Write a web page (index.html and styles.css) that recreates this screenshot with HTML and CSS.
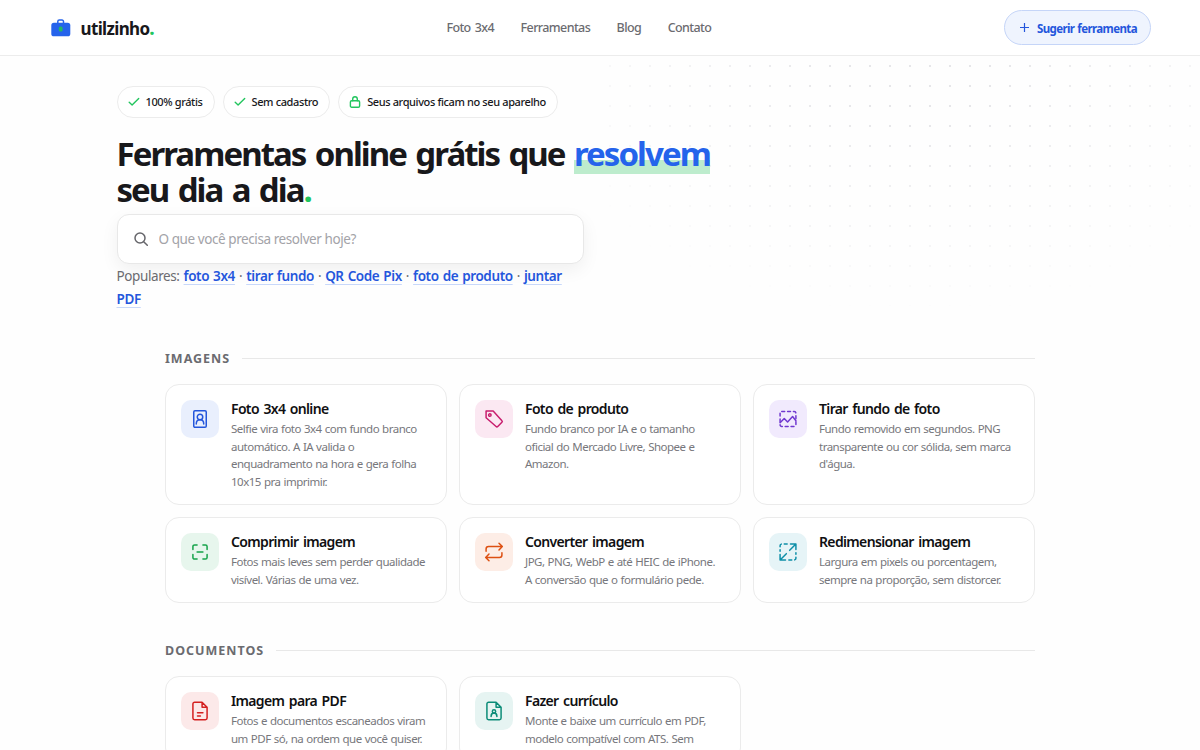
FILE: index.html
```html
<!DOCTYPE html>
<html lang="pt-BR">
<head>
  <meta charset="UTF-8" />
  <meta name="viewport" content="width=device-width, initial-scale=1.0"/>
  <title>utilzinho</title>
  <link rel="stylesheet" href="styles.css">
</head>
<body>
  <header class="topbar">
    <a class="logo" href="#">
      <svg width="20" height="18" viewBox="0 0 20 18">
        <path d="M6.800 4.500V2.600a1.500 1.500 0 0 1 1.500-1.500h2.700a1.500 1.500 0 0 1 1.500 1.500v1.900" fill="none" stroke="#2563eb" stroke-width="1.500"/>
        <rect x="0.300" y="3.800" width="19" height="13.500" rx="2.600" fill="#2563eb"/>
        <rect x="7.800" y="7.500" width="3.800" height="5" rx="1.500" fill="#22b866"/>
      </svg>
      <span>utilzinho<b class="dot">.</b></span>
    </a>
    <nav class="menu">
      <a href="#">Foto 3x4</a>
      <a href="#">Ferramentas</a>
      <a href="#">Blog</a>
      <a href="#">Contato</a>
    </nav>
    <a class="suggest" href="#">
      <svg width="9" height="9" viewBox="0 0 9 9"><path d="M4.500 0v9M0 4.500h9"/></svg>
      <span>Sugerir ferramenta</span>
    </a>
  </header>

  <section class="hero">
    <div class="hero-inner">
      <div class="badges">
        <span class="badge"><svg width="12" height="12" viewBox="0 0 12 12"><path d="M1.200 6.300l2.900 2.700L10.700 2.500"/></svg><span>100% grátis</span></span>
        <span class="badge"><svg width="12" height="12" viewBox="0 0 12 12"><path d="M1.200 6.300l2.900 2.700L10.700 2.500"/></svg><span>Sem cadastro</span></span>
        <span class="badge"><svg width="12" height="12" viewBox="0 0 12 12"><rect x="1.400" y="4.800" width="9.200" height="6.400" rx="1.300"/><path d="M3.700 4.800V3a2.300 2.300 0 0 1 4.600 0v1.800"/></svg><span>Seus arquivos ficam no seu aparelho</span></span>
      </div>
      <h1>Ferramentas online grátis que <span class="mark">resolvem</span><br>seu dia a dia<span class="dot">.</span></h1>
      <div class="search">
        <svg width="14" height="14" viewBox="0 0 14 14"><circle cx="6" cy="6" r="5"/><path d="M9.700 9.700l3.600 3.600"/></svg>
        <input type="text" placeholder="O que você precisa resolver hoje?">
      </div>
      <p class="popular">Populares: <a href="#">foto 3x4</a> · <a href="#">tirar fundo</a> · <a href="#">QR Code Pix</a> · <a href="#">foto de produto</a> · <a href="#">juntar<br>PDF</a></p>
    </div>
  </section>

  <main class="tools">
    <h2><span>IMAGENS</span></h2>
    <div class="grid">
      <a class="card" href="#">
        <span class="icon blue"><svg viewBox="0 0 24 24"><rect x="4.500" y="2" width="15" height="20" rx="1.500"/><circle cx="12" cy="9.500" r="3.300"/><path d="M7.500 18c0-3 2-5 4.500-5s4.500 2 4.500 5"/></svg></span>
        <div><h3>Foto 3x4 online</h3><p>Selfie vira foto 3x4 com fundo branco<br>automático. A IA valida o<br>enquadramento na hora e gera folha<br>10x15 pra imprimir.</p></div>
      </a>
      <a class="card" href="#">
        <span class="icon pink"><svg viewBox="0 0 24 24"><path d="M2.500 2.500h8.500L21.500 14q1 1 0 2l-5 5q-1 1-2 0L2.500 10.500z"/><circle cx="7" cy="7.300" r="1.500"/></svg></span>
        <div><h3>Foto de produto</h3><p>Fundo branco por IA e o tamanho<br>oficial do Mercado Livre, Shopee e<br>Amazon.</p></div>
      </a>
      <a class="card" href="#">
        <span class="icon purple"><svg viewBox="0 0 24 24"><rect x="2.500" y="3" width="19" height="18" rx="2" stroke-dasharray="3.500 3.500"/><path d="M2.500 16.500l5-5 4 4 6-6.500 4 5"/></svg></span>
        <div><h3>Tirar fundo de foto</h3><p>Fundo removido em segundos. PNG<br>transparente ou cor sólida, sem marca<br>d'água.</p></div>
      </a>
      <a class="card" href="#">
        <span class="icon green"><svg viewBox="0 0 24 24"><path d="M8.500 3.500H5.500a2 2 0 0 0-2 2V9M15.500 3.500H18.500a2 2 0 0 1 2 2V9M8.500 20.500H5.500a2 2 0 0 1-2-2V15M15.500 20.500H18.500a2 2 0 0 0 2-2V15M8.500 12h7"/></svg></span>
        <div><h3>Comprimir imagem</h3><p>Fotos mais leves sem perder qualidade<br>visível. Várias de uma vez.</p></div>
      </a>
      <a class="card" href="#">
        <span class="icon orange"><svg viewBox="0 0 24 24"><path d="M18 1.500l4 4-4 4M2.500 11V8.500a3 3 0 0 1 3-3H22M6 22.500l-4-4 4-4M21.500 13v2.500a3 3 0 0 1-3 3H2"/></svg></span>
        <div><h3>Converter imagem</h3><p>JPG, PNG, WebP e até HEIC de iPhone.<br>A conversão que o formulário pede.</p></div>
      </a>
      <a class="card" href="#">
        <span class="icon cyan"><svg viewBox="0 0 24 24"><path d="M15 2.500h6.500V9M9 21.500H2.500V15M21.500 2.500L14 10M2.500 21.500L10 14"/><path d="M11 2.500H4.500a2 2 0 0 0-2 2V11M13 21.500h6.500a2 2 0 0 0 2-2V13" stroke-dasharray="3.500 3.500"/></svg></span>
        <div><h3>Redimensionar imagem</h3><p>Largura em pixels ou porcentagem,<br>sempre na proporção, sem distorcer.</p></div>
      </a>
    </div>

    <h2><span>DOCUMENTOS</span></h2>
    <div class="grid">
      <a class="card" href="#">
        <span class="icon red"><svg viewBox="0 0 24 24"><path d="M14.500 1.500H5.500a2 2 0 0 0-2 2v17a2 2 0 0 0 2 2h13a2 2 0 0 0 2-2V7.500zM14.500 1.500v6h6M9 14h6.500M9 18h3.500"/></svg></span>
        <div><h3>Imagem para PDF</h3><p>Fotos e documentos escaneados viram<br>um PDF só, na ordem que você quiser.</p></div>
      </a>
      <a class="card" href="#">
        <span class="icon teal"><svg viewBox="0 0 24 24"><path d="M14.500 1.500H5.500a2 2 0 0 0-2 2v17a2 2 0 0 0 2 2h13a2 2 0 0 0 2-2V7.500zM14.500 1.500v6h6"/><circle cx="12" cy="12.500" r="2"/><path d="M8.500 18.500c0-2.500 1.500-4 3.500-4s3.500 1.500 3.500 4"/></svg></span>
        <div><h3>Fazer currículo</h3><p>Monte e baixe um currículo em PDF,<br>modelo compatível com ATS. Sem</p></div>
      </a>
    </div>
  </main>
</body>
</html>
```

FILE: styles.css
```css
* {
  box-sizing: border-box;
}

body {
  margin: 0;
  height: 750px;
  overflow: hidden;
  background: #fefefe;
  color: #18181b;
  font-family: "Noto Sans", sans-serif;
}

a {
  color: inherit;
  text-decoration: none;
}

svg {
  flex: none;
  fill: none;
  stroke-linecap: round;
  stroke-linejoin: round;
}

.dot {
  color: #22c55e;
}

.topbar {
  display: flex;
  align-items: center;
  justify-content: space-between;
  height: 56px;
  padding: 0 49px 0 51px;
  background: #fff;
  border-bottom: 1px solid #ececec;
}

.logo {
  display: flex;
  align-items: center;
  gap: 9.5px;
  font-size: 17px;
  font-weight: 700;
  letter-spacing: -0.65px;
}

.logo span {
  padding-top: 2px;
}

.menu {
  display: flex;
  gap: 26.5px;
  color: #6b6b70;
  font-size: 12.5px;
  font-weight: 500;
  letter-spacing: -0.6px;
  word-spacing: 1.5px;
}

.suggest {
  display: flex;
  align-items: center;
  gap: 8px;
  height: 35px;
  padding: 0 13px 0 15px;
  border: 1px solid #c5d5f8;
  border-radius: 18px;
  background: #eff4fe;
  color: #2456dc;
  font-size: 11.5px;
  font-weight: 700;
  letter-spacing: -0.6px;
  word-spacing: 0.5px;
}

.suggest span {
  padding-top: 1px;
}

.suggest svg {
  stroke: #2456dc;
  stroke-width: 1.2;
}

.hero {
  position: relative;
  height: 276px;
  padding: 30px 117px 0 116.5px;
}

/* dotted texture fading away from the top */
.hero::before {
  content: "";
  position: absolute;
  top: 0;
  right: 0;
  width: 600px;
  height: 250px;
  background-image: radial-gradient(circle, #e6e6e9 1px, transparent 1.5px);
  background-size: 20px 20px;
  -webkit-mask-image: radial-gradient(ellipse 66% 100% at 53% 5%, #000 20%, transparent 100%);
  mask-image: radial-gradient(ellipse 66% 100% at 53% 5%, #000 20%, transparent 100%);
}

.hero-inner {
  position: relative;
}

.badges {
  display: flex;
  gap: 8px;
}

.badge {
  display: flex;
  align-items: center;
  gap: 6px;
  height: 32px;
  padding: 0 11px 1px 10px;
  border: 1px solid #ececec;
  border-radius: 16px;
  background: #fff;
  font-size: 11px;
  font-weight: 500;
  letter-spacing: -0.38px;
}

.badge svg {
  stroke: #22c55e;
  stroke-width: 1.4;
}

h1 {
  margin: 18px 0 0;
  font-size: 33px;
  font-weight: 700;
  line-height: 36px;
  letter-spacing: -1.95px;
  word-spacing: 2.7px;
  white-space: nowrap;
}

.mark {
  color: #2563eb;
  background: linear-gradient(#bdeccd, #bdeccd) 0 29px / 100% 14px no-repeat;
}

.search {
  display: flex;
  align-items: center;
  gap: 11px;
  width: 467px;
  height: 50px;
  margin-top: 6px;
  padding: 0 16px;
  border: 1px solid #e8e8e8;
  border-radius: 12px;
  background: #fff;
  box-shadow: 0 6px 18px rgba(0, 0, 0, 0.06);
}

.search svg {
  stroke: #66666b;
  stroke-width: 1.5;
}

.search input {
  flex: 1;
  padding: 0;
  border: 0;
  outline: 0;
  background: none;
  font-family: inherit;
  font-size: 13.5px;
  letter-spacing: -0.42px;
}

.search input::placeholder {
  color: #a3a3a8;
}

.popular {
  margin: 0.5px 0 0;
  color: #6b6b70;
  font-size: 13.5px;
  line-height: 23.5px;
  letter-spacing: -0.4px;
  word-spacing: 0.9px;
  white-space: nowrap;
}

.popular a {
  color: #2456dc;
  font-weight: 600;
  text-decoration: underline 1px #c8d8fa;
  text-decoration-skip-ink: none;
  text-underline-offset: 3px;
}

.tools {
  width: 870px;
  margin: 0 auto;
}

h2 {
  display: flex;
  align-items: center;
  gap: 12px;
  height: 20px;
  margin: 16px 0;
  color: #6b6b70;
  font-size: 12.5px;
  font-weight: 700;
  letter-spacing: 1px;
}

h2::after {
  content: "";
  flex: 1;
  height: 1px;
  background: #e8e8e8;
}

.grid {
  display: grid;
  grid-template-columns: repeat(3, minmax(0, 1fr));
  gap: 12px;
  margin-bottom: 37px;
}

.card {
  display: flex;
  align-items: flex-start;
  gap: 12px;
  padding: 15px 15px 14px;
  border: 1px solid #ebebeb;
  border-radius: 14px;
  background: #fff;
  white-space: nowrap;
}

.icon {
  display: flex;
  flex: none;
  align-items: center;
  justify-content: center;
  width: 38px;
  height: 38px;
  border-radius: 10px;
}

.icon svg {
  width: 20px;
  height: 20px;
  stroke: currentColor;
  stroke-width: 1.8;
}

h3 {
  margin: 0;
  color: #101012;
  font-size: 14px;
  font-weight: 650;
  line-height: 18px;
  letter-spacing: -0.65px;
  word-spacing: 1.5px;
}

.card p {
  margin: 2px 0 0;
  color: #77777c;
  font-size: 11.5px;
  line-height: 17.5px;
  letter-spacing: -0.5px;
  word-spacing: 0.5px;
}

.blue { color: #2456dc; background: #e9effd; }
.pink { color: #c81e6e; background: #fbe8f2; }
.purple { color: #7038d0; background: #f1eafd; }
.green { color: #16a34a; background: #e7f6ed; }
.orange { color: #dd5012; background: #fdede6; }
.cyan { color: #0e8fa8; background: #e6f4f7; }
.red { color: #d42020; background: #fce9e9; }
.teal { color: #0c8c78; background: #e6f4f2; }
```
